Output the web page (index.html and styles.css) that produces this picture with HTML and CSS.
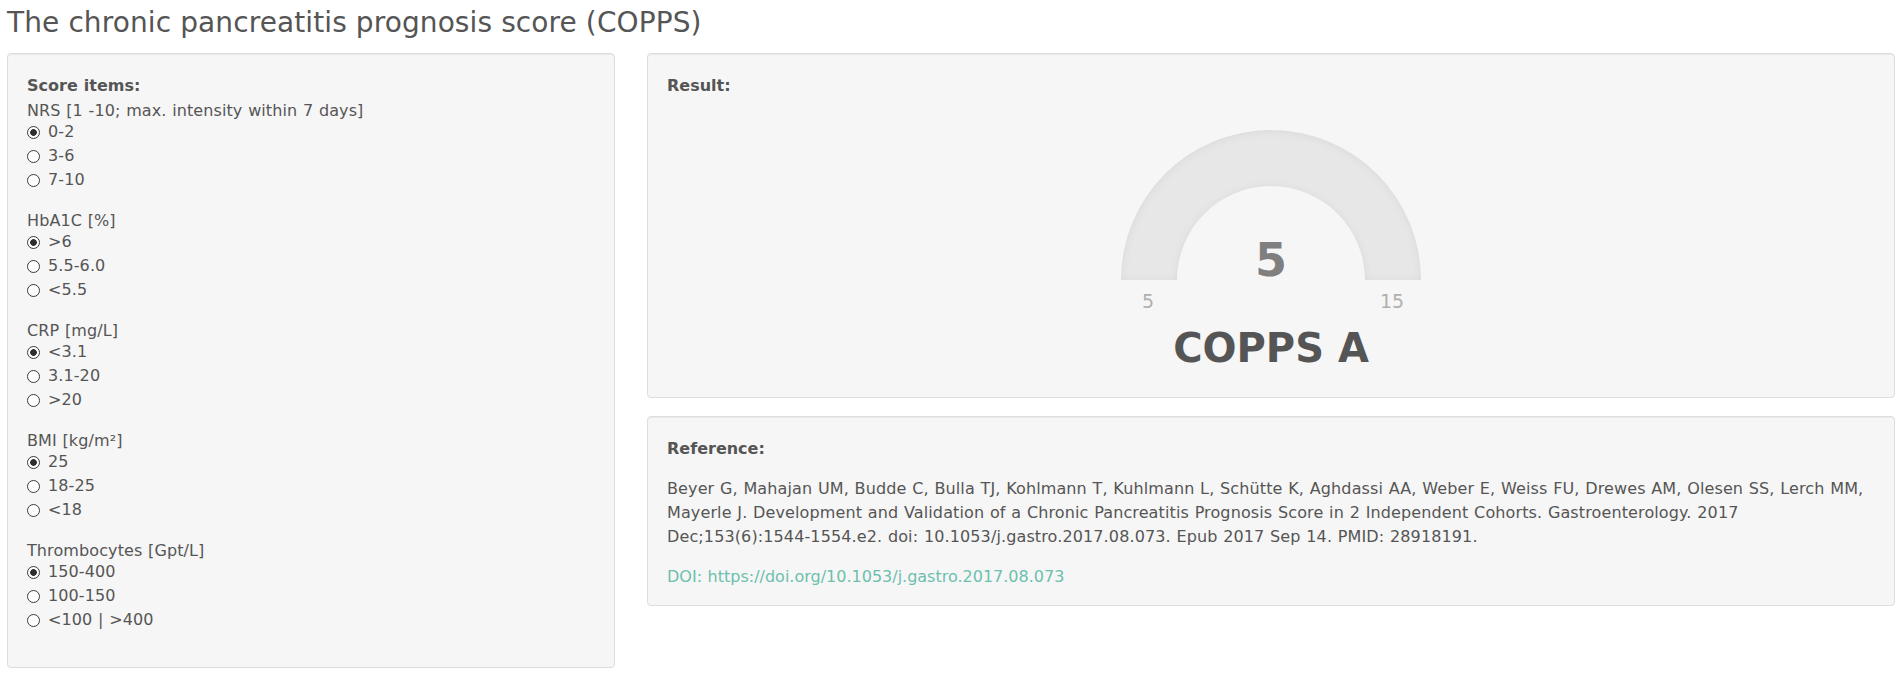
FILE: index.html
```html
<!DOCTYPE html>
<html lang="en">
<head>
<meta charset="utf-8">
<title>COPPS</title>
<link rel="stylesheet" href="styles.css">
</head>
<body>
<div class="page">
  <h1 class="title">The chronic pancreatitis prognosis score (COPPS)</h1>
  <div class="layout">
    <div class="well items">
      <div class="items-head">Score items:</div>
      <div class="group">
        <div class="group-label">NRS [1 -10; max. intensity within 7 days]</div>
        <label class="opt"><input type="radio" name="nrs" checked><span>0-2</span></label>
        <label class="opt"><input type="radio" name="nrs"><span>3-6</span></label>
        <label class="opt"><input type="radio" name="nrs"><span>7-10</span></label>
      </div>
      <div class="group">
        <div class="group-label">HbA1C [%]</div>
        <label class="opt"><input type="radio" name="hba" checked><span>&gt;6</span></label>
        <label class="opt"><input type="radio" name="hba"><span>5.5-6.0</span></label>
        <label class="opt"><input type="radio" name="hba"><span>&lt;5.5</span></label>
      </div>
      <div class="group">
        <div class="group-label">CRP [mg/L]</div>
        <label class="opt"><input type="radio" name="crp" checked><span>&lt;3.1</span></label>
        <label class="opt"><input type="radio" name="crp"><span>3.1-20</span></label>
        <label class="opt"><input type="radio" name="crp"><span>&gt;20</span></label>
      </div>
      <div class="group">
        <div class="group-label">BMI [kg/m²]</div>
        <label class="opt"><input type="radio" name="bmi" checked><span>25</span></label>
        <label class="opt"><input type="radio" name="bmi"><span>18-25</span></label>
        <label class="opt"><input type="radio" name="bmi"><span>&lt;18</span></label>
      </div>
      <div class="group">
        <div class="group-label">Thrombocytes [Gpt/L]</div>
        <label class="opt"><input type="radio" name="thr" checked><span>150-400</span></label>
        <label class="opt"><input type="radio" name="thr"><span>100-150</span></label>
        <label class="opt"><input type="radio" name="thr"><span>&lt;100 | &gt;400</span></label>
      </div>
    </div>

    <div class="right">
      <div class="well result">
        <div class="head">Result:</div>
        <svg class="gauge" width="400" height="220" viewBox="0 0 400 220">
          <defs>
            <filter id="inner" x="-10%" y="-10%" width="120%" height="120%">
              <feComponentTransfer in="SourceAlpha">
                <feFuncA type="table" tableValues="1 0"/>
              </feComponentTransfer>
              <feGaussianBlur stdDeviation="4"/>
              <feOffset dx="0" dy="1" result="offsetblur"/>
              <feFlood flood-color="#000" flood-opacity="0.14" result="color"/>
              <feComposite in2="offsetblur" operator="in"/>
              <feComposite in2="SourceAlpha" operator="in"/>
              <feMerge>
                <feMergeNode in="SourceGraphic"/>
                <feMergeNode/>
              </feMerge>
            </filter>
          </defs>
          <path class="arc" d="M 50 182 A 150 150 0 0 1 350 182 L 294 182 A 94 94 0 0 0 106 182 Z" filter="url(#inner)"/>
          <text class="g-value" x="200" y="178">5</text>
          <text class="g-label" x="77" y="210">5</text>
          <text class="g-label" x="321" y="210">15</text>
        </svg>
        <div class="score-class">COPPS A</div>
      </div>

      <div class="well reference">
        <p class="head">Reference:</p>
        <p class="cite">Beyer G, Mahajan UM, Budde C, Bulla TJ, Kohlmann T, Kuhlmann L, Schütte K, Aghdassi AA, Weber E, Weiss FU, Drewes AM, Olesen SS, Lerch MM, Mayerle J. Development and Validation of a Chronic Pancreatitis Prognosis Score in 2 Independent Cohorts. Gastroenterology. 2017 Dec;153(6):1544-1554.e2. doi: 10.1053/j.gastro.2017.08.073. Epub 2017 Sep 14. PMID: 28918191.</p>
        <p class="doi"><a href="#">DOI: https://doi.org/10.1053/j.gastro.2017.08.073</a></p>
      </div>
    </div>
  </div>
</div>
</body>
</html>
```

FILE: styles.css
```css
html, body {
  margin: 0;
  padding: 0;
  background: #ffffff;
}

body {
  font-family: "DejaVu Sans", Verdana, sans-serif;
  font-size: 16px;
  line-height: 24px;
  color: #555555;
  word-spacing: 0.5px;
}

.page {
  padding: 0 7px;
}

.title {
  margin: 7px 0 15px;
  font-size: 28px;
  line-height: 31px;
  font-weight: normal;
  color: #555555;
  word-spacing: 0;
  letter-spacing: 0.1px;
}

.layout {
  display: grid;
  grid-template-columns: 608px 1fr;
  column-gap: 32px;
  align-items: start;
}

.well {
  background: #f6f6f6;
  border: 1px solid #dddddd;
  border-radius: 4px;
  box-shadow: inset 0 1px 1px rgba(0, 0, 0, 0.05);
  padding: 20px 19px 19px;
}

.items {
  padding-bottom: 35px;
}

.items-head {
  font-weight: bold;
  margin-bottom: 3px;
}

.group + .group {
  margin-top: 19px;
}

.group-label {
  line-height: 19px;
  letter-spacing: 0.1px;
}

.opt {
  display: flex;
  align-items: center;
  height: 24px;
  gap: 8px;
  letter-spacing: 0.1px;
}

.opt input {
  -webkit-appearance: none;
  appearance: none;
  width: 13px;
  height: 13px;
  margin: 0;
  border: 1px solid #3a3a3a;
  border-radius: 50%;
  background: #ffffff;
  flex: none;
}

.opt input:checked {
  background: radial-gradient(circle, #2e2e2e 0, #2e2e2e 3px, #ffffff 3.7px);
}

.right {
  display: flex;
  flex-direction: column;
}

.result {
  padding-bottom: 25px;
  margin-bottom: 18px;
}

.head {
  font-weight: bold;
  margin: 0;
}

.gauge {
  display: block;
  margin: 0 auto;
  font-family: "DejaVu Sans", Verdana, sans-serif;
}

.arc {
  fill: #e8e7e8;
}

.g-value {
  font-size: 46px;
  font-weight: bold;
  fill: #7f7f7f;
  text-anchor: middle;
}

.g-label {
  font-size: 19px;
  fill: #b0b0b0;
  text-anchor: middle;
}

.score-class {
  margin-top: 6px;
  text-align: center;
  font-size: 40px;
  line-height: 48px;
  font-weight: bold;
  color: #555555;
  word-spacing: 0;
}

.reference {
  padding-bottom: 16px;
}

.reference p {
  margin: 0;
}

.reference .cite {
  margin-top: 16px;
  letter-spacing: 0.12px;
}

.reference .doi {
  margin-top: 16px;
}

.doi a {
  color: #6cc0ad;
  text-decoration: none;
}
```
